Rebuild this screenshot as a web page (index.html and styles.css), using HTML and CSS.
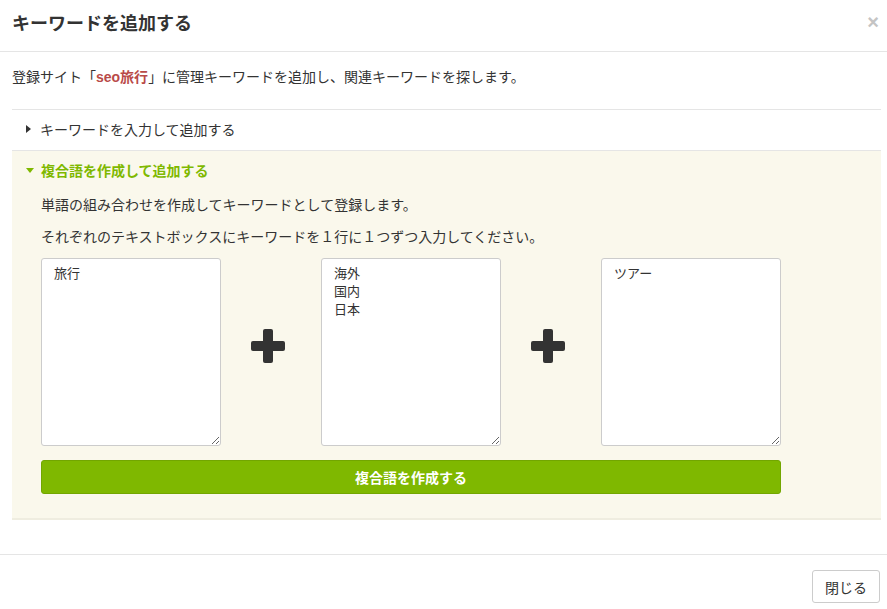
FILE: index.html
```html
<!DOCTYPE html>
<html lang="ja">
<head>
    <meta charset="UTF-8">
    <title>キーワードを追加する</title>
    <link rel="stylesheet" href="styles.css">
</head>
<body>
    <div class="modal">
        <div class="modal-header">
            <h3>キーワードを追加する</h3>
            <span class="close">×</span>
        </div>

        <div class="modal-body">
            <p class="lead">登録サイト「<strong>seo旅行</strong>」に管理キーワードを追加し、関連キーワードを探します。</p>

            <div class="accordion">
                <div class="acc-item">
                    <div class="acc-title"><span class="arrow-right"></span>キーワードを入力して追加する</div>
                </div>
                <div class="acc-item open">
                    <div class="acc-title"><span class="arrow-down"></span>複合語を作成して追加する</div>
                    <div class="acc-content">
                        <p>単語の組み合わせを作成してキーワードとして登録します。</p>
                        <p>それぞれのテキストボックスにキーワードを１行に１つずつ入力してください。</p>

                        <div class="words">
                            <textarea>旅行</textarea>
                            <span class="plus"></span>
                            <textarea>海外
国内
日本</textarea>
                            <span class="plus"></span>
                            <textarea>ツアー</textarea>
                        </div>

                        <button class="btn-create" type="button">複合語を作成する</button>
                    </div>
                </div>
            </div>
        </div>

        <div class="modal-footer">
            <button class="btn-close" type="button">閉じる</button>
        </div>
    </div>
</body>
</html>
```

FILE: styles.css
```css
body {
    margin: 0;
    overflow: hidden;
    background-color: white;
    font-family: "Liberation Sans", "Noto Sans CJK JP", sans-serif;
    font-size: 14px;
    color: #333;
}

.modal {
    width: 893px;
}

.modal-header {
    display: flex;
    justify-content: space-between;
    align-items: center;
    height: 52px;
    padding: 0 14px 0 12px;
    border-bottom: 1px solid #e5e5e5;
    box-sizing: border-box;
}

.modal-header h3 {
    margin: 0;
    font-size: 18px;
    font-weight: bold;
    padding-bottom: 8px;
}

.close {
    color: #c4c4c4;
    font-size: 20px;
    font-weight: bold;
    padding-bottom: 7px;
}

.modal-body {
    padding: 14px 12px 34px 12px;
}

.lead {
    margin: 0 0 21px 0;
    line-height: 22px;
}

.lead strong {
    color: #b94a48;
}

.accordion {
    border-top: 1px solid #e5e5e5;
}

.acc-title {
    display: flex;
    align-items: center;
    height: 41px;
    padding-left: 14px;
    padding-bottom: 2px;
    box-sizing: border-box;
    border-bottom: 1px solid #e5e5e5;
}

.arrow-right {
    width: 0;
    height: 0;
    border-top: 4px solid transparent;
    border-bottom: 4px solid transparent;
    border-left: 5px solid #333;
    margin-right: 9px;
}

.arrow-down {
    width: 0;
    height: 0;
    border-left: 4px solid transparent;
    border-right: 4px solid transparent;
    border-top: 5px solid #7fb800;
    margin-right: 7px;
}

.open {
    background-color: #faf8ec;
    border-bottom: 2px solid #efede0;
}

.open .acc-title {
    height: 38px;
    padding-bottom: 0;
    border-bottom: none;
    color: #7fb800;
    font-weight: bold;
}

.acc-content {
    padding: 5px 100px 24px 29px;
}

.acc-content p {
    margin: 0 0 10px 0;
    line-height: 22px;
}

.words {
    display: grid;
    grid-template-columns: 180px 100px 180px 100px 180px;
    align-items: center;
}

.words textarea {
    height: 188px;
    box-sizing: border-box;
    padding: 6px 12px;
    border: 1px solid #ccc;
    border-radius: 3px;
    font-family: "Liberation Sans", "Noto Sans CJK JP", sans-serif;
    font-size: 13px;
    line-height: 18px;
    color: #333;
    background-color: white;
}

.plus {
    position: relative;
    justify-self: center;
    width: 34px;
    height: 34px;
    margin: 0 6px 12px 0;
}

.plus::before,
.plus::after {
    content: "";
    position: absolute;
    background-color: #333;
    border-radius: 2px;
}

.plus::before {
    left: 0;
    top: 12px;
    width: 34px;
    height: 10px;
}

.plus::after {
    left: 12px;
    top: 0;
    width: 10px;
    height: 34px;
}

.btn-create {
    display: block;
    width: 740px;
    height: 34px;
    margin-top: 14px;
    background-color: #7fb800;
    border: 1px solid #72a600;
    border-radius: 3px;
    color: white;
    font-family: "Liberation Sans", "Noto Sans CJK JP", sans-serif;
    font-size: 14px;
    font-weight: bold;
}

.modal-footer {
    display: flex;
    justify-content: flex-end;
    border-top: 1px solid #e5e5e5;
    padding: 15px 13px 10px 0;
}

.btn-close {
    height: 33px;
    padding: 0 12px;
    background-color: white;
    border: 1px solid #ccc;
    border-radius: 3px;
    font-family: "Liberation Sans", "Noto Sans CJK JP", sans-serif;
    font-size: 14px;
    color: #333;
}
```
